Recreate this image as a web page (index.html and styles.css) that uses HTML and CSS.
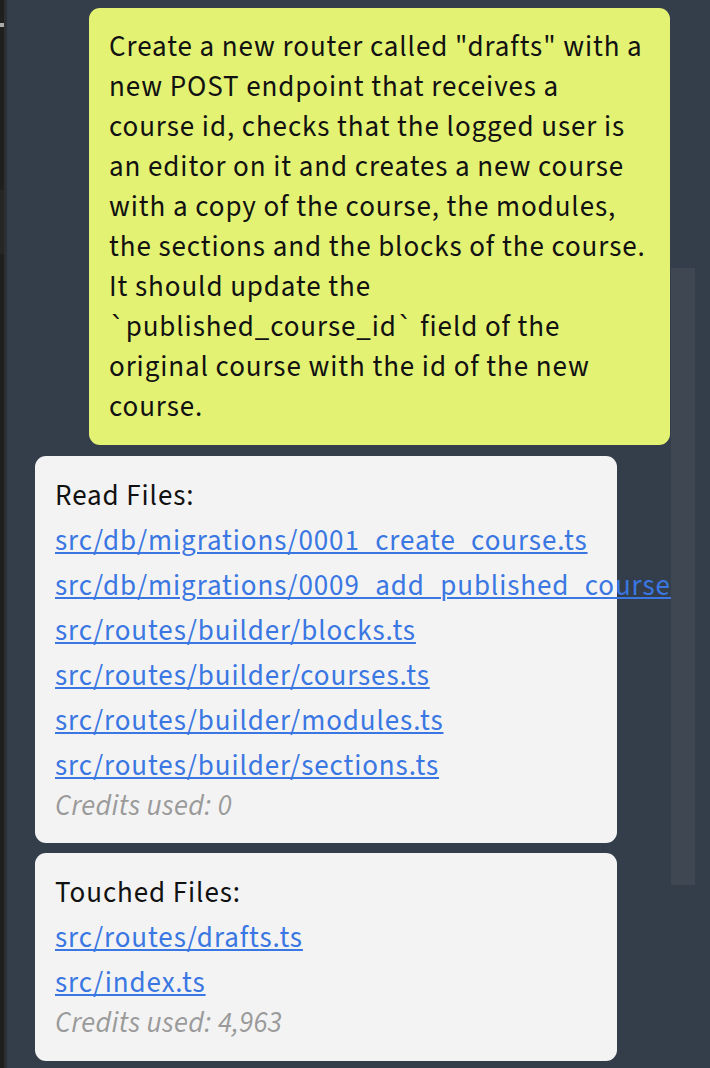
FILE: index.html
```html
<!DOCTYPE html>
<html lang="en">
<head>
<meta charset="utf-8">
<title>Chat</title>
<link rel="stylesheet" href="styles.css">
</head>
<body>
<div class="app">
  <div class="edge">
    <div class="edge-mark"></div>
    <div class="edge-band"></div>
  </div>
  <div class="edge2"></div>
  <main class="chat">
    <div class="bubble user">Create a new router called "drafts" with a<br>new POST endpoint that receives a<br>course id, checks that the logged user is<br>an editor on it and creates a new course<br>with a copy of the course, the modules,<br>the sections and the blocks of the course.<br>It should update the<br>`published_course_id` field of the<br>original course with the id of the new<br>course.</div>
    <div class="card">
      <div class="card-title">Read Files:</div>
      <a class="file" href="#">src/db/migrations/0001_create_course.ts</a>
      <a class="file" href="#">src/db/migrations/0009_add_published_course_id.ts</a>
      <a class="file" href="#">src/routes/builder/blocks.ts</a>
      <a class="file" href="#">src/routes/builder/courses.ts</a>
      <a class="file" href="#">src/routes/builder/modules.ts</a>
      <a class="file" href="#">src/routes/builder/sections.ts</a>
      <div class="credits">Credits used: 0</div>
    </div>
    <div class="card">
      <div class="card-title">Touched Files:</div>
      <a class="file" href="#">src/routes/drafts.ts</a>
      <a class="file" href="#">src/index.ts</a>
      <div class="credits">Credits used: 4,963</div>
    </div>
  </main>
  <div class="scroll-track"><div class="scroll-thumb"></div></div>
</div>
</body>
</html>
```
FILE: styles.css
```css
html, body {
  margin: 0;
  padding: 0;
  height: 100%;
  background: #343e4a;
}
body {
  font-family: "Source Sans 3", "Source Sans Pro", "Lato", sans-serif;
  font-size: 29px;
  font-weight: 450;
  letter-spacing: 0.92px;
  color: #111;
  overflow: hidden;
}
.app {
  display: flex;
  height: 1068px;
  width: 710px;
}
.edge {
  width: 4px;
  flex: none;
  background: #1f1f1f;
  display: flex;
  flex-direction: column;
}
.edge-mark {
  margin-top: 23px;
  height: 4px;
  background: #a9a9a9;
}
.edge-band {
  margin-top: 163px;
  height: 64px;
  background: #262626;
}
.edge2 {
  width: 3px;
  flex: none;
  background: #2c3035;
}
.chat {
  width: 664px;
  flex: none;
  overflow: hidden;
  padding: 8px 1px 0 28px;
  box-sizing: border-box;
  display: flex;
  flex-direction: column;
  align-items: flex-start;
}
.bubble.user {
  align-self: flex-end;
  width: 581px;
  box-sizing: border-box;
  background: #e3f273;
  border-radius: 11px;
  padding: 19px 20px 18px 20px;
  line-height: 40px;
  white-space: nowrap;
}
.card {
  width: 582px;
  box-sizing: border-box;
  background: #f3f3f3;
  border-radius: 11px;
  padding: 20px 20px 17px 20px;
  line-height: 40px;
  margin-top: 11px;
  display: flex;
  flex-direction: column;
  align-items: flex-start;
}
.card + .card {
  margin-top: 10px;
  padding-bottom: 18px;
}
.card-title {
  color: #111;
}
.file {
  display: block;
  margin-top: 5px;
  color: #3a77e2;
  white-space: nowrap;
  text-decoration: underline;
  text-decoration-thickness: 2px;
  text-underline-offset: 2px;
}
.credits {
  font-style: italic;
  color: #9a9a9a;
  letter-spacing: 0.35px;
}
.scroll-track {
  width: 24px;
  flex: none;
}
.scroll-thumb {
  margin-top: 268px;
  height: 617px;
  background: #3e4752;
}
```
